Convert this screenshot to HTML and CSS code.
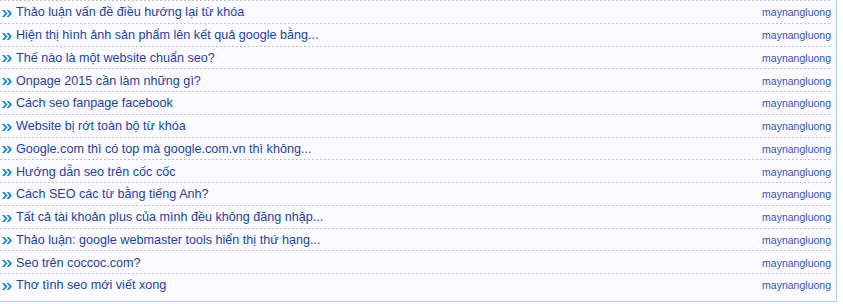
FILE: index.html
```html
<!DOCTYPE html>
<html lang="vi">
<head>
    <meta charset="UTF-8">
    <title>Bài viết mới</title>
    <link rel="stylesheet" href="styles.css">
</head>
<body>
    <div class="topic-box">
        <ul class="topic-list">
            <li class="topic"><a href="#"><svg class="arrow" viewBox="0 0 10 7"><path d="M0 0h2.5l3 3.5-3 3.5H0l3-3.5zM4.5 0H7l3 3.5L7 7H4.5l3-3.5z"/></svg>Thảo luận vấn đề điều hướng lại từ khóa</a><span class="author">maynangluong</span></li>
            <li class="topic"><a href="#"><svg class="arrow" viewBox="0 0 10 7"><path d="M0 0h2.5l3 3.5-3 3.5H0l3-3.5zM4.5 0H7l3 3.5L7 7H4.5l3-3.5z"/></svg>Hiện thị hình ảnh sản phẩm lên kết quả google bằng...</a><span class="author">maynangluong</span></li>
            <li class="topic"><a href="#"><svg class="arrow" viewBox="0 0 10 7"><path d="M0 0h2.5l3 3.5-3 3.5H0l3-3.5zM4.5 0H7l3 3.5L7 7H4.5l3-3.5z"/></svg>Thế nào là một website chuẩn seo?</a><span class="author">maynangluong</span></li>
            <li class="topic"><a href="#"><svg class="arrow" viewBox="0 0 10 7"><path d="M0 0h2.5l3 3.5-3 3.5H0l3-3.5zM4.5 0H7l3 3.5L7 7H4.5l3-3.5z"/></svg>Onpage 2015 cần làm những gì?</a><span class="author">maynangluong</span></li>
            <li class="topic"><a href="#"><svg class="arrow" viewBox="0 0 10 7"><path d="M0 0h2.5l3 3.5-3 3.5H0l3-3.5zM4.5 0H7l3 3.5L7 7H4.5l3-3.5z"/></svg>Cách seo fanpage facebook</a><span class="author">maynangluong</span></li>
            <li class="topic"><a href="#"><svg class="arrow" viewBox="0 0 10 7"><path d="M0 0h2.5l3 3.5-3 3.5H0l3-3.5zM4.5 0H7l3 3.5L7 7H4.5l3-3.5z"/></svg>Website bị rớt toàn bộ từ khóa</a><span class="author">maynangluong</span></li>
            <li class="topic"><a href="#"><svg class="arrow" viewBox="0 0 10 7"><path d="M0 0h2.5l3 3.5-3 3.5H0l3-3.5zM4.5 0H7l3 3.5L7 7H4.5l3-3.5z"/></svg>Google.com thì có top mà google.com.vn thì không...</a><span class="author">maynangluong</span></li>
            <li class="topic"><a href="#"><svg class="arrow" viewBox="0 0 10 7"><path d="M0 0h2.5l3 3.5-3 3.5H0l3-3.5zM4.5 0H7l3 3.5L7 7H4.5l3-3.5z"/></svg>Hướng dẫn seo trên cốc cốc</a><span class="author">maynangluong</span></li>
            <li class="topic"><a href="#"><svg class="arrow" viewBox="0 0 10 7"><path d="M0 0h2.5l3 3.5-3 3.5H0l3-3.5zM4.5 0H7l3 3.5L7 7H4.5l3-3.5z"/></svg>Cách SEO các từ bằng tiếng Anh?</a><span class="author">maynangluong</span></li>
            <li class="topic"><a href="#"><svg class="arrow" viewBox="0 0 10 7"><path d="M0 0h2.5l3 3.5-3 3.5H0l3-3.5zM4.5 0H7l3 3.5L7 7H4.5l3-3.5z"/></svg>Tất cả tài khoản plus của mình đều không đăng nhập...</a><span class="author">maynangluong</span></li>
            <li class="topic"><a href="#"><svg class="arrow" viewBox="0 0 10 7"><path d="M0 0h2.5l3 3.5-3 3.5H0l3-3.5zM4.5 0H7l3 3.5L7 7H4.5l3-3.5z"/></svg>Thảo luận: google webmaster tools hiển thị thứ hạng...</a><span class="author">maynangluong</span></li>
            <li class="topic"><a href="#"><svg class="arrow" viewBox="0 0 10 7"><path d="M0 0h2.5l3 3.5-3 3.5H0l3-3.5zM4.5 0H7l3 3.5L7 7H4.5l3-3.5z"/></svg>Seo trên coccoc.com?</a><span class="author">maynangluong</span></li>
            <li class="topic"><a href="#"><svg class="arrow" viewBox="0 0 10 7"><path d="M0 0h2.5l3 3.5-3 3.5H0l3-3.5zM4.5 0H7l3 3.5L7 7H4.5l3-3.5z"/></svg>Thơ tình seo mới viết xong</a><span class="author">maynangluong</span></li>
        </ul>
    </div>
</body>
</html>
```

FILE: styles.css
```css
body {
  margin: 0;
  padding: 0;
  background: #fff;
  font-family: "Liberation Sans", Arial, sans-serif;
}

.topic-box {
  width: 831px;
  padding: 0 5px 5px 0;
  background-color: #fbfbff;
  border-right: 1px solid #a9cbe8;
  border-bottom: 1px solid #a9cbe8;
}

.topic-list {
  list-style: none;
  margin: 0;
  padding: 0;
}

.topic {
  display: flex;
  justify-content: space-between;
  align-items: center;
  height: 20.75px;
  padding-top: 2px;
  background: repeating-linear-gradient(to right, #c2c2c2 0 2px, transparent 2px 4px) top left / 100% 1px no-repeat;
}

.topic a {
  display: flex;
  align-items: center;
  color: #1d42a4;
  font-size: 12.6px;
  text-decoration: none;
}

.topic .arrow {
  width: 10px;
  height: 7px;
  margin: 2px 4px 0 2px;
  fill: #1e8fd2;
}

.author {
  color: #3356b0;
  font-size: 10.5px;
}
```
